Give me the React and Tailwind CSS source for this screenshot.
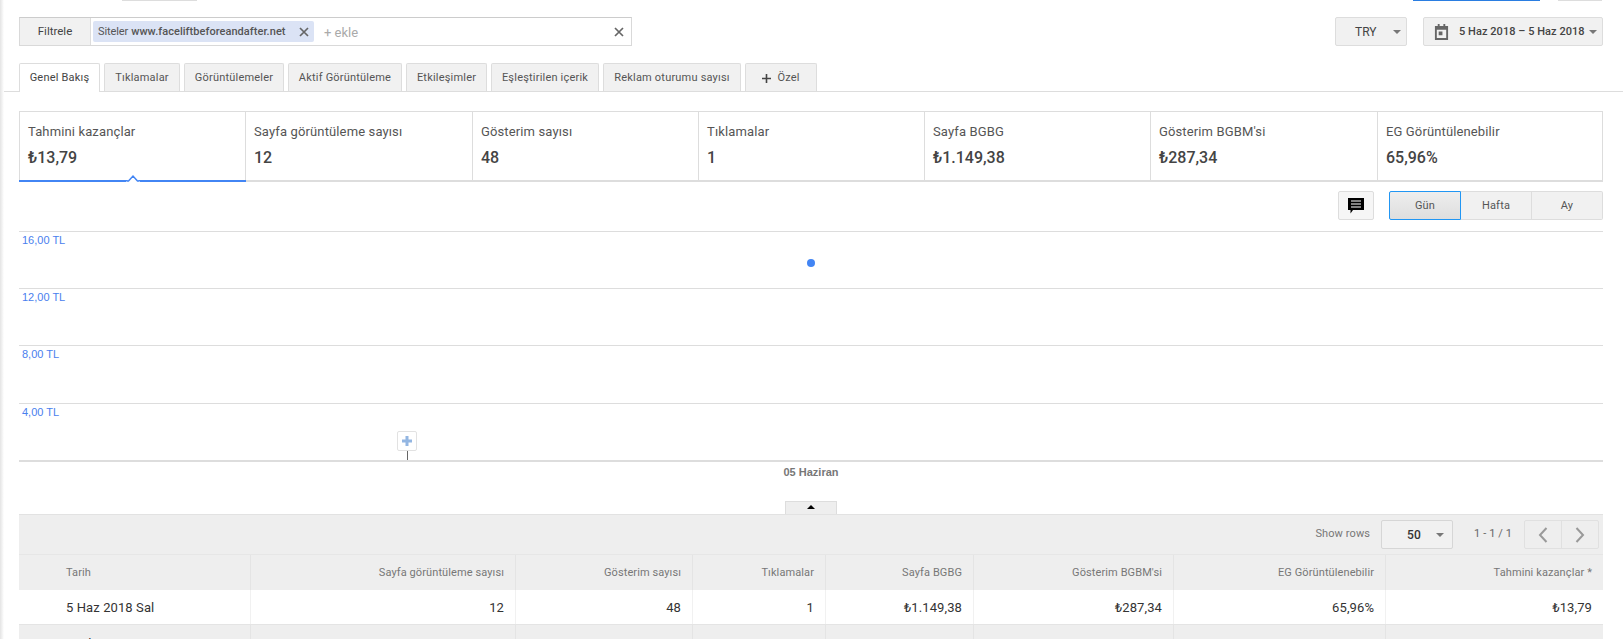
import React from 'react'

const stats = [
  { label: 'Tahmini kazançlar', value: '₺13,79', w: 'w-[226px]', active: true },
  { label: 'Sayfa görüntüleme sayısı', value: '12', w: 'w-[227px]' },
  { label: 'Gösterim sayısı', value: '48', w: 'w-[226px]' },
  { label: 'Tıklamalar', value: '1', w: 'w-[226px]' },
  { label: 'Sayfa BGBG', value: '₺1.149,38', w: 'w-[226px]' },
  { label: "Gösterim BGBM'si", value: '₺287,34', w: 'w-[227px]' },
  { label: 'EG Görüntülenebilir', value: '65,96%', w: 'flex-1' },
]

const tabs = [
  { label: 'Tıklamalar', w: 'w-[76px]' },
  { label: 'Görüntülemeler', w: 'w-[100px]' },
  { label: 'Aktif Görüntüleme', w: 'w-[114px]' },
  { label: 'Etkileşimler', w: 'w-[81px]' },
  { label: 'Eşleştirilen içerik', w: 'w-[108px]' },
  { label: 'Reklam oturumu sayısı', w: 'w-[138px]' },
]

const columns = [
  { w: 'w-[231px]', head: 'Tarih', row: '5 Haz 2018 Sal', total: 'Toplam' },
  { w: 'w-[265px]', head: 'Sayfa görüntüleme sayısı', row: '12', total: '12' },
  { w: 'w-[177px]', head: 'Gösterim sayısı', row: '48', total: '48' },
  { w: 'w-[133px]', head: 'Tıklamalar', row: '1', total: '1' },
  { w: 'w-[148px]', head: 'Sayfa BGBG', row: '₺1.149,38', total: '₺1.149,38' },
  { w: 'w-[200px]', head: "Gösterim BGBM'si", row: '₺287,34', total: '₺287,34' },
  { w: 'w-[212px]', head: 'EG Görüntülenebilir', row: '65,96%', total: '65,96%' },
  { w: 'flex-1', head: 'Tahmini kazançlar *', row: '₺13,79', total: '₺13,79' },
]

const gridLabels = [
  { label: '16,00 TL', h: 'h-[57px]' },
  { label: '12,00 TL', h: 'h-[57px]' },
  { label: '8,00 TL', h: 'h-[58px]' },
  { label: '4,00 TL', h: 'h-[57px]' },
]

const Caret = ({ className = '' }) => (
  <span className={`inline-block w-0 h-0 border-x-[4px] border-x-transparent border-t-[4px] border-t-[#777] ${className}`} />
)

const Close = ({ className = '' }) => (
  <svg width="10" height="10" viewBox="0 0 10 10" className={className}>
    <path d="M1 1l8 8M9 1l-8 8" stroke="#666" strokeWidth="1.7" fill="none" />
  </svg>
)

const cellText = (i) => (i === 0 ? 'pl-[47px] text-left' : 'pr-[11px] text-right')

const App = () => {
  return (
    <div className="relative h-[639px] w-[1623px] overflow-hidden bg-white font-[family-name:Roboto,sans-serif] text-[#444]">
      {/* page shadow on the far left */}
      <div className="absolute left-0 top-0 h-full w-[4px] bg-gradient-to-r from-[#e4e4e4] to-white" />

      {/* bits of the header cut off at the top */}
      <div className="flex h-[1px]">
        <div className="ml-[122px] w-[75px] bg-[#ddd]" />
        <div className="ml-[1216px] w-[127px] bg-[#2a7de1]" />
        <div className="ml-[18px] w-[44px] bg-[#ddd]" />
      </div>

      {/* filter row */}
      <div className="mt-[16px] flex h-[29px] items-start justify-between pl-[19px] pr-[20px]">
        <div className="flex h-[29px] w-[613px] border border-[#d9d9d9] border-t-[#ccc]">
          <div className="flex w-[71px] items-center justify-center border-r border-[#ddd] bg-[#f1f1f1] pt-[1px] text-[11.5px]">Filtrele</div>
          <div className="flex flex-1 items-center pl-[2px] pr-[7px]">
            <div className="flex h-[21px] w-[221px] items-center rounded-[2px] bg-[#dbe3f5] pl-[5px] pr-[5px] text-[11px]">
              <span className="pt-[1px] tracking-[-0.1px] text-[#555]">Siteler</span>
              <span className="ml-[3px] flex-1 pt-[1px] font-medium tracking-[0.05px] text-[#555]">www.faceliftbeforeandafter.net</span>
              <Close />
            </div>
            <span className="ml-[10px] mt-[2px] flex-1 text-[13px] text-[#aaa]">+ ekle</span>
            <Close />
          </div>
        </div>
        <div className="flex gap-[16px]">
          <div className="flex h-[29px] w-[72px] items-center rounded-[2px] border border-[#ddd] bg-[#f1f1f1] text-[12px]">
            <span className="ml-[19px] flex-1">TRY</span>
            <Caret className="mr-[5px]" />
          </div>
          <div className="flex h-[29px] w-[180px] items-center rounded-[2px] border border-[#ddd] bg-[#f1f1f1] text-[11px] font-medium">
            <svg width="15" height="17" viewBox="0 0 16 18" className="ml-[10px]">
              <path d="M1 3h3V1h2v2h4V1h2v2h3v15H1z M3 7v9h10V7z" fill="#666" fillRule="evenodd" />
              <rect x="5" y="9" width="4" height="4" fill="#666" />
            </svg>
            <span className="ml-[10px] flex-1 whitespace-nowrap pt-[1px] tracking-[0.05px]">5 Haz 2018 – 5 Haz 2018</span>
            <Caret className="mr-[5px]" />
          </div>
        </div>
      </div>

      {/* tabs */}
      <div className="mt-[17px] flex h-[29px] gap-[4px] border-b border-[#ddd] pl-[19px]">
        <div className="flex h-[29px] w-[81px] items-center justify-center rounded-t-[2px] border border-b-0 border-[#ddd] bg-white pt-[1px] text-[11px] tracking-[0.2px]">Genel Bakış</div>
        {tabs.map((tab) => (
          <div key={tab.label} className={`flex h-[28px] ${tab.w} items-center justify-center rounded-t-[2px] border border-b-0 border-[#ddd] bg-[#f1f1f1] pt-[1px] text-[11px] tracking-[0.2px] text-[#555]`}>
            {tab.label}
          </div>
        ))}
        <div className="flex h-[28px] w-[72px] items-center justify-center gap-[6px] rounded-t-[2px] border border-b-0 border-[#ddd] bg-[#f1f1f1] pt-[1px] text-[11px] tracking-[0.2px] text-[#555]">
          <svg width="9" height="9" viewBox="0 0 9 9"><path d="M4.500 0v9M0 4.500h9" stroke="#444" strokeWidth="1.600" /></svg>
          Özel
        </div>
      </div>

      {/* scorecards */}
      <div className="ml-[19px] mt-[19px] flex h-[71px] w-[1584px] border border-b-2 border-[#ddd]">
        {stats.map((stat, i) => (
          <div key={stat.label} className={`relative ${stat.w} ${i < stats.length - 1 ? 'border-r border-[#ddd]' : ''} pl-[8px] pt-[11px]`}>
            <div className="text-[13px] leading-[18px] tracking-[0.13px] text-[#555]">{stat.label}</div>
            <div className="mt-[7px] text-[16px] font-medium leading-[20px] text-[#444]">{stat.value}</div>
            {stat.active && (
              <>
                <div className="absolute bottom-[-2px] left-[-1px] right-[-1px] h-[2px] bg-[#4285f4]" />
                <svg width="14" height="8" viewBox="0 0 14 8" className="absolute bottom-[-2px] left-[106px]">
                  <path d="M0 8h14L7 1z" fill="#fff" />
                  <path d="M1 7h1.500L7 2l4.500 5H13" stroke="#4285f4" strokeWidth="1.500" fill="none" />
                </svg>
              </>
            )}
          </div>
        ))}
      </div>

      {/* chart controls */}
      <div className="mt-[9px] flex h-[29px] justify-end gap-[15px] pr-[20px]">
        <div className="flex h-[29px] w-[36px] items-center justify-center rounded-[2px] border border-[#ddd] bg-[#f6f6f6]">
          <svg width="16" height="16" viewBox="0 0 16 16">
            <path d="M0 0h16v12H5l-2.500 3.500V12H0z" fill="#000" />
            <path d="M3 3h10M3 6h10M3 9h10" stroke="#fff" strokeWidth="1.200" />
          </svg>
        </div>
        <div className="flex h-[29px] w-[214px] text-[11px] tracking-[0.2px] text-[#555]">
          <div className="flex w-[72px] items-center justify-center rounded-l-[2px] border border-[#2196f3] bg-gradient-to-b from-[#eee] to-[#dedede] pt-[2px]">Gün</div>
          <div className="flex w-[71px] items-center justify-center border-y border-r border-[#ddd] bg-[#f1f1f1] pt-[2px]">Hafta</div>
          <div className="flex flex-1 items-center justify-center rounded-r-[2px] border-y border-r border-[#ddd] bg-[#f1f1f1] pt-[2px]">Ay</div>
        </div>
      </div>

      {/* chart */}
      <div className="relative ml-[19px] mt-[11px] w-[1584px] font-[family-name:Liberation_Sans,sans-serif]">
        {gridLabels.map((item) => (
          <div key={item.label} className={`${item.h} border-t border-[#ddd] pl-[3px] pt-[2px] text-[11px] leading-[13px] text-[#4a80ee]`}>{item.label}</div>
        ))}
        <div className="border-t-2 border-[#ddd] pt-[3px] text-center text-[11px] font-bold leading-[14px] text-[#777]">05 Haziran</div>
        <div className="absolute left-[788px] top-[28px] size-[8px] rounded-full bg-[#4285f4]" />
        <div className="absolute left-[378px] top-[200px] flex h-[20px] w-[20px] items-center justify-center rounded-[2px] border border-[#e2e2e2] bg-white">
          <svg width="10" height="10" viewBox="0 0 10 10"><path d="M5 0v10M0 5h10" stroke="#93b6e2" strokeWidth="3" /></svg>
        </div>
        <div className="absolute left-[388px] top-[220px] h-[9px] w-[1px] bg-[#666]" />
      </div>

      {/* table toggle */}
      <div className="mr-auto ml-[785px] mt-[22px] flex h-[13px] w-[52px] justify-center border-x border-t border-[#ddd] bg-[#eee] pt-[3px]">
        <span className="h-0 w-0 border-x-[4px] border-b-[4px] border-x-transparent border-b-black" />
      </div>

      {/* table */}
      <div className="ml-[19px] w-[1584px] border-t border-[#e2e2e2] bg-[#eee] text-[11px] tracking-[0.1px]">
        <div className="flex h-[39px] items-center justify-end pr-[4px]">
          <span className="text-[#777]">Show rows</span>
          <div className="ml-[11px] flex h-[29px] w-[72px] items-center rounded-[2px] border border-[#d6d6d6] bg-[#f1f1f1]">
            <span className="ml-[25px] flex-1 text-[12px] font-medium text-[#333]">50</span>
            <Caret className="mr-[8px]" />
          </div>
          <span className="ml-[21px] text-[#666]">1 - 1 / 1</span>
          <div className="ml-[12px] flex h-[29px] w-[75px] rounded-[2px] border border-[#e0e0e0]">
            <div className="flex flex-1 items-center justify-center border-r border-[#e0e0e0]">
              <svg width="10" height="16" viewBox="0 0 10 16"><path d="M8.500 1L2 8l6.500 7" stroke="#999" strokeWidth="2" fill="none" /></svg>
            </div>
            <div className="flex flex-1 items-center justify-center">
              <svg width="10" height="16" viewBox="0 0 10 16"><path d="M1.500 1L8 8l-6.500 7" stroke="#999" strokeWidth="2" fill="none" /></svg>
            </div>
          </div>
        </div>
        <div className="flex h-[36px] border-t border-[#e6e6e6] text-[#777]">
          {columns.map((col, i) => (
            <div key={col.head} className={`${col.w} ${i > 0 ? 'border-l border-[#e4e4e4]' : ''} ${cellText(i)} leading-[36px]`}>{col.head}</div>
          ))}
        </div>
        <div className="flex h-[35px] border-b border-[#e4e4e4] bg-white text-[13px] text-[#333]">
          {columns.map((col, i) => (
            <div key={col.head} className={`${col.w} ${i > 0 ? 'border-l border-[#f1f1f1]' : ''} ${cellText(i)} leading-[36px]`}>{col.row}</div>
          ))}
        </div>
        <div className="flex h-[35px] text-[13px] text-[#333]">
          {columns.map((col, i) => (
            <div key={col.head} className={`${col.w} ${i > 0 ? 'border-l border-[#e4e4e4]' : ''} ${cellText(i)} leading-[38px]`}>{col.total}</div>
          ))}
        </div>
      </div>
    </div>
  )
}

export default App
